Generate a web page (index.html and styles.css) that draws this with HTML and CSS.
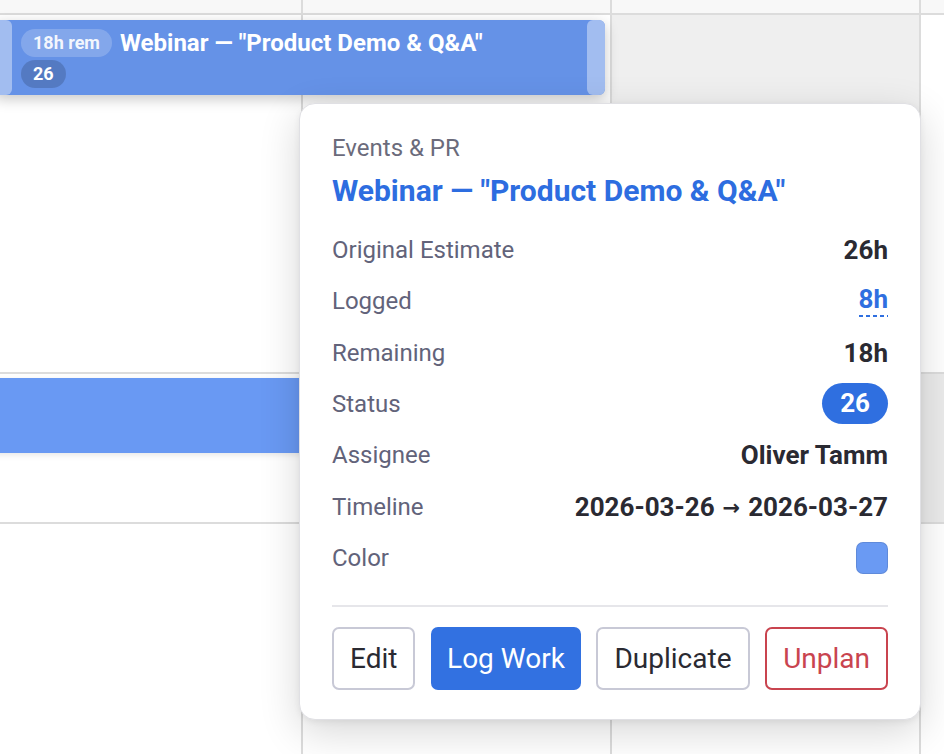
FILE: index.html
```html
<!DOCTYPE html>
<html lang="en">
<head>
<meta charset="utf-8">
<title>Calendar popover</title>
<link rel="stylesheet" href="styles.css">
</head>
<body>
<div class="calendar">
  <div class="cell head c1 r1"></div>
  <div class="cell head c2 r1"></div>
  <div class="cell head c3 r1"></div>
  <div class="cell head c4 r1"></div>

  <div class="cell c1 r2"></div>
  <div class="cell c2 r2"></div>
  <div class="cell shade c3 r2"></div>
  <div class="cell c4 r2"></div>

  <div class="cell c1 r3"></div>
  <div class="cell c2 r3"></div>
  <div class="cell c3 r3"></div>
  <div class="cell shade-dark c4 r3"></div>

  <div class="cell c1 r4"></div>
  <div class="cell c2 r4"></div>
  <div class="cell c3 r4"></div>
  <div class="cell c4 r4"></div>

  <div class="bar bar-main">
    <span class="handle"></span>
    <div class="bar-body">
      <div class="bar-line">
        <span class="chip chip-light">18h rem</span>
        <span class="bar-title">Webinar — "Product Demo &amp; Q&amp;A"</span>
      </div>
      <div class="bar-line">
        <span class="chip chip-dark">26</span>
      </div>
    </div>
    <span class="handle"></span>
  </div>

  <div class="bar bar-second"></div>
</div>

<div class="popover">
  <div class="category">Events &amp; PR</div>
  <div class="title">Webinar — "Product Demo &amp; Q&amp;A"</div>
  <div class="details">
    <div class="row"><span class="label">Original Estimate</span><span class="value">26h</span></div>
    <div class="row"><span class="label">Logged</span><span class="value link">8h</span></div>
    <div class="row"><span class="label">Remaining</span><span class="value">18h</span></div>
    <div class="row"><span class="label">Status</span><span class="status">26</span></div>
    <div class="row"><span class="label">Assignee</span><span class="value">Oliver Tamm</span></div>
    <div class="row"><span class="label">Timeline</span><span class="value">2026-03-26<span class="arrow">→</span>2026-03-27</span></div>
    <div class="row"><span class="label">Color</span><span class="swatch"></span></div>
  </div>
  <div class="divider"></div>
  <div class="actions">
    <button class="btn">Edit</button>
    <button class="btn btn-primary">Log Work</button>
    <button class="btn">Duplicate</button>
    <button class="btn btn-danger">Unplan</button>
  </div>
</div>
</body>
</html>
```

FILE: styles.css
```css
* { box-sizing: border-box; }

html, body {
  margin: 0;
  padding: 0;
  height: 100%;
  overflow: hidden;
  font-family: Roboto, "Liberation Sans", Arial, sans-serif;
}

.calendar {
  display: grid;
  grid-template-columns: 301px 307px 307px 1fr;
  grid-template-rows: 13px 357px 148px 1fr;
  gap: 2px;
  height: 754px;
  background: #dcdcdc;
}

.cell { background: #ffffff; }
.cell.head { background: #f8f8f8; }
.cell.shade { background: #efefef; }
.cell.shade-dark { background: #ebebeb; }

.c1 { grid-column: 1; }
.c2 { grid-column: 2; }
.c3 { grid-column: 3; }
.c4 { grid-column: 4; }
.r1 { grid-row: 1; }
.r2 { grid-row: 2; }
.r3 { grid-row: 3; }
.r4 { grid-row: 4; }

.bar {
  align-self: start;
  height: 75px;
  border-radius: 6px;
}

.bar-main {
  grid-row: 2;
  grid-column: 1 / 3;
  margin: 5px 5px 0 -6px;
  background: #6592e7;
  display: flex;
  overflow: hidden;
  box-shadow: 0 4px 14px rgba(0, 0, 0, 0.22);
  color: #ffffff;
}

.handle {
  width: 18px;
  flex: none;
  background: rgba(255, 255, 255, 0.4);
  border-radius: 6px;
}

.bar-body {
  flex: 1;
  padding: 9px 9px 8px 9px;
  display: flex;
  flex-direction: column;
  gap: 3px;
  min-width: 0;
}

.bar-line {
  display: flex;
  align-items: center;
  gap: 8px;
}

.chip {
  height: 28px;
  line-height: 28px;
  border-radius: 14px;
  padding: 0 12px;
  font-size: 18px;
  font-weight: 700;
  white-space: nowrap;
}

.chip-light {
  background: rgba(255, 255, 255, 0.2);
  color: rgba(255, 255, 255, 0.92);
}

.chip-dark {
  background: rgba(0, 0, 0, 0.16);
  color: #ffffff;
}

.bar-title {
  font-size: 24px;
  font-weight: 700;
  white-space: nowrap;
}

.bar-second {
  grid-row: 3;
  grid-column: 1 / 3;
  margin: 4px 0 0 -20px;
  background: #6999f3;
  box-shadow: 0 2px 6px rgba(0, 0, 0, 0.1);
}

.popover {
  position: absolute;
  left: 299px;
  top: 103px;
  width: 622px;
  background: #ffffff;
  border: 1px solid #e0e0e4;
  border-radius: 16px;
  padding: 28px 32px 29px 32px;
  box-shadow: 0 12px 40px rgba(0, 0, 0, 0.16), 0 2px 6px rgba(0, 0, 0, 0.06);
}

.category {
  font-size: 24px;
  line-height: 32px;
  color: #6b6b7b;
}

.title {
  margin-top: 7px;
  font-size: 30px;
  line-height: 40px;
  font-weight: 700;
  color: #2d6de0;
}

.details {
  margin-top: 18.5px;
  display: flex;
  flex-direction: column;
  gap: 10.33px;
}

.row {
  display: flex;
  align-items: center;
  justify-content: space-between;
  min-height: 41px;
}

.label {
  font-size: 24px;
  color: #62637a;
}

.value {
  font-size: 26px;
  font-weight: 700;
  color: #2a2a32;
}

.arrow {
  display: inline-block;
  font-family: "DejaVu Sans", sans-serif;
  font-size: 21px;
  font-weight: 700;
  margin: 0 8px;
  vertical-align: 1px;
}

.value.link {
  color: #2f6fe0;
  line-height: 28px;
  padding-bottom: 4px;
  background-image: repeating-linear-gradient(to right, #2f6fe0 0 4px, transparent 4px 7px);
  background-size: 100% 2px;
  background-position: left bottom;
  background-repeat: no-repeat;
}

.status {
  background: #2f6fe0;
  color: #ffffff;
  font-size: 26px;
  font-weight: 700;
  height: 41px;
  line-height: 41px;
  padding: 0 18px;
  border-radius: 21px;
}

.swatch {
  width: 32px;
  height: 32px;
  border-radius: 7px;
  background: #6a9af3;
  border: 1px solid rgba(0, 0, 0, 0.1);
}

.divider {
  margin-top: 27px;
  height: 2px;
  background: #e6e6ea;
}

.actions {
  margin-top: 19.5px;
  display: flex;
  justify-content: space-between;
}

.btn {
  height: 63px;
  padding: 0 16px;
  border: 2px solid #c8c9d6;
  border-radius: 7px;
  background: #ffffff;
  font-family: Roboto, "Liberation Sans", Arial, sans-serif;
  font-size: 28px;
  color: #2a2a32;
}

.btn-primary {
  background: #3271e1;
  border: none;
  color: #ffffff;
}

.btn-danger {
  border-color: #c9444f;
  color: #c9444f;
}
```
